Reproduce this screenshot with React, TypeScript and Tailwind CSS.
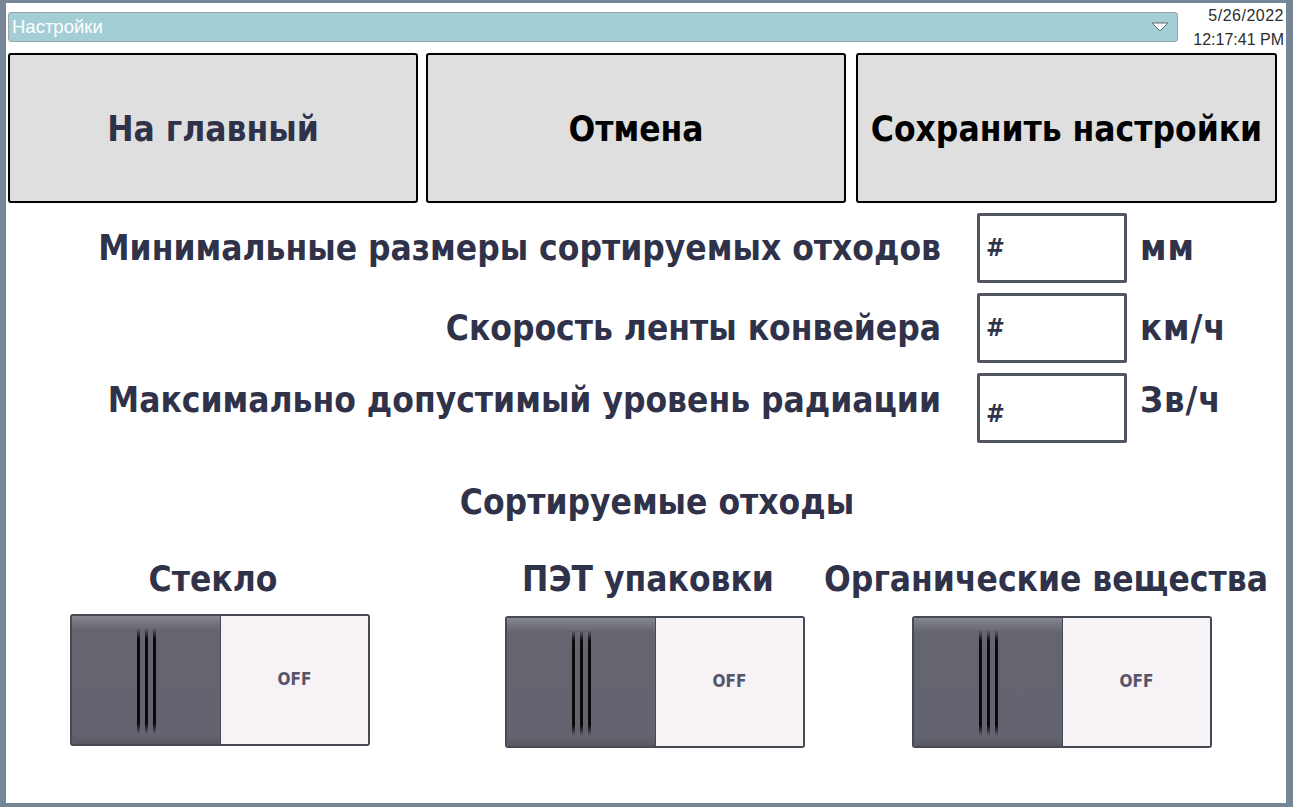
import React from 'react';

const boldFont = { fontFamily: '"DejaVu Sans Condensed", "DejaVu Sans", sans-serif' };

function Toggle({ className = '' }: { className?: string }) {
  return (
    <div className={`flex h-[132px] w-[300px] overflow-hidden rounded-[3px] border-2 border-[#454a55] ${className}`}>
      <div className="relative flex w-[148px] items-start justify-center bg-[linear-gradient(to_bottom,#85868f,#64656f_14px,#63646f_118px,#585963)]">
        <div className="mt-[12px] flex gap-[5px]">
          <span className="h-[106px] w-[3px] bg-[linear-gradient(to_bottom,transparent,#000_10%,#000_90%,transparent)] opacity-90" />
          <span className="h-[106px] w-[3px] bg-[linear-gradient(to_bottom,transparent,#000_10%,#000_90%,transparent)] opacity-90" />
          <span className="h-[106px] w-[3px] bg-[linear-gradient(to_bottom,transparent,#000_10%,#000_90%,transparent)] opacity-90" />
        </div>
      </div>
      <div className="w-[1px] bg-[#454a55]" />
      <div className="flex flex-1 items-center justify-center bg-[#f6f2f6]">
        <span className="text-[17px] font-bold text-[#555468]" style={boldFont}>OFF</span>
      </div>
    </div>
  );
}

function Field({ label, unit, lift = false }: { label: string; unit: string; lift?: boolean }) {
  return (
    <div className="mt-[10px] flex h-[70px] items-center">
      <div className={`w-[935px] text-right text-[35px] font-bold text-[#30324a] ${lift ? 'pb-[16px]' : ''}`} style={boldFont}>
        {label}
      </div>
      <div className="ml-[36px] flex h-[70px] w-[150px] items-center rounded-[2px] border-[3px] border-[#4f5460] bg-white pl-[6px]">
        <span className={`text-[25px] font-bold text-[#30324a] ${lift ? 'pt-[12px]' : ''}`} style={boldFont}>#</span>
      </div>
      <div className={`ml-[13px] text-[36px] font-bold tracking-[1px] text-[#30324a] ${lift ? 'pb-[16px]' : ''}`} style={boldFont}>
        {unit}
      </div>
    </div>
  );
}

export default function App() {
  return (
    <div className="h-[807px] w-[1293px] bg-[#768696] pb-[4px] pl-[6px] pr-[7px] pt-[3px]">
      <div className="flex h-full w-full flex-col bg-white">
        {/* header */}
        <div className="flex h-[50px] items-start pl-[2px]">
          <div
            className="mt-[9px] flex h-[30px] w-[1170px] items-center justify-between rounded-[3px] border border-[#9aa4ad] bg-[#a4ced6] pl-[3px] pr-[8px]"
            style={{ fontFamily: '"Liberation Sans", Arial, sans-serif' }}
          >
            <span className="text-[18.5px] text-white">Настройки</span>
            <svg width="18" height="10" viewBox="0 0 18 10">
              <path d="M1 1 L17 1 L9 9 Z" fill="#fff" stroke="#5f6872" strokeWidth="1" strokeLinejoin="round" />
            </svg>
          </div>
          <div
            className="ml-auto mt-[1px] pr-[2px] text-right text-[16px] leading-[24px] text-[#2c2c2c]"
            style={{ fontFamily: '"Liberation Sans", Arial, sans-serif' }}
          >
            <div className="tracking-[0.5px]">5/26/2022</div>
            <div>12:17:41 PM</div>
          </div>
        </div>

        {/* buttons */}
        <div className="flex h-[150px] pl-[2px]">
          <button className="w-[410px] rounded-[3px] border-2 border-black bg-[#dfdfdf] pt-[3px] text-[35px] font-bold text-[#30324a]" style={boldFont}>
            На главный
          </button>
          <button className="ml-[8px] w-[420px] rounded-[3px] border-2 border-black bg-[#dfdfdf] pt-[3px] text-[35px] font-bold text-black" style={boldFont}>
            Отмена
          </button>
          <button className="ml-[10px] w-[421px] rounded-[3px] border-2 border-black bg-[#dfdfdf] pt-[3px] text-[35px] font-bold text-black" style={boldFont}>
            Сохранить настройки
          </button>
        </div>

        {/* fields */}
        <Field label="Минимальные размеры сортируемых отходов" unit="мм" />
        <Field label="Скорость ленты конвейера" unit="км/ч" />
        <Field label="Максимально допустимый уровень радиации" unit="Зв/ч" lift />

        {/* sorted waste */}
        <div className="mt-[39px] h-[40px] pl-[22px] text-center text-[35px] font-bold leading-[40px] text-[#30324a]" style={boldFont}>
          Сортируемые отходы
        </div>

        <div className="mt-[37px] flex h-[40px] text-[35px] font-bold leading-[40px] text-[#30324a]" style={boldFont}>
          <div className="ml-[57px] w-[300px] text-center">Стекло</div>
          <div className="ml-[135px] w-[300px] text-center">ПЭТ упаковки</div>
          <div className="ml-[18px] w-[460px] whitespace-nowrap text-center">Органические вещества</div>
        </div>

        <div className="mt-[15px] flex items-start">
          <Toggle className="ml-[64px]" />
          <Toggle className="ml-[135px] mt-[2px]" />
          <Toggle className="ml-[107px] mt-[2px]" />
        </div>
      </div>
    </div>
  );
}
